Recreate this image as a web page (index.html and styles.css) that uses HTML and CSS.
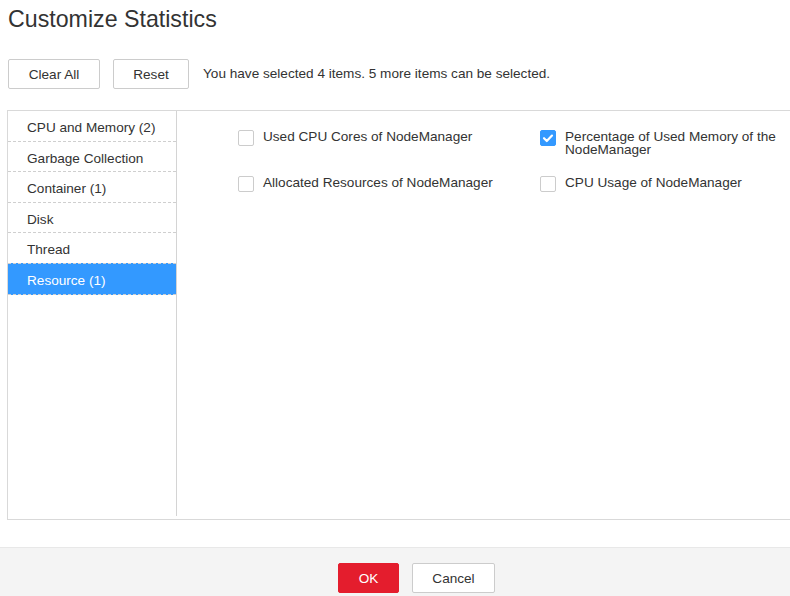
FILE: index.html
```html
<!DOCTYPE html>
<html lang="en">
<head>
<meta charset="UTF-8">
<meta name="viewport" content="width=device-width">
<title>Customize Statistics</title>
<link rel="stylesheet" href="styles.css">
</head>
<body>
<div class="dialog">
  <h1 class="title">Customize Statistics</h1>

  <div class="toolbar">
    <button class="btn btn-clear">Clear All</button>
    <button class="btn btn-reset">Reset</button>
    <span class="hint">You have selected 4 items. 5 more items can be selected.</span>
  </div>

  <div class="panel">
    <ul class="groups">
      <li class="group">CPU and Memory (2)</li>
      <li class="group">Garbage Collection</li>
      <li class="group">Container (1)</li>
      <li class="group">Disk</li>
      <li class="group">Thread</li>
      <li class="group active">Resource (1)</li>
    </ul>

    <div class="metrics">
      <label class="metric">
        <span class="check"></span>
        <span class="metric-name">Used CPU Cores of NodeManager</span>
      </label>
      <label class="metric">
        <span class="check checked">
          <svg viewBox="0 0 16 16" width="16" height="16"><path d="M4 8.2 L6.8 11 L12 5.6" fill="none" stroke="#fff" stroke-width="2.2" stroke-linecap="round" stroke-linejoin="round"/></svg>
        </span>
        <span class="metric-name">Percentage of Used Memory of the NodeManager</span>
      </label>
      <label class="metric">
        <span class="check"></span>
        <span class="metric-name">Allocated Resources of NodeManager</span>
      </label>
      <label class="metric">
        <span class="check"></span>
        <span class="metric-name">CPU Usage of NodeManager</span>
      </label>
    </div>
  </div>

  <div class="footer">
    <button class="btn btn-ok">OK</button>
    <button class="btn btn-cancel">Cancel</button>
  </div>
</div>
</body>
</html>
```

FILE: styles.css
```css
html, body {
  margin: 0;
  padding: 0;
  overflow: hidden;
  background: #fff;
}
body {
  font-family: "Liberation Sans", Arial, sans-serif;
  font-size: 13.6px;
  color: #333;
}
.dialog {
  width: 833px;
  height: 596px;
}
.title {
  margin: 0;
  padding: 6px 0 0 8px;
  font-size: 23.2px;
  font-weight: normal;
  line-height: 26px;
  color: #333;
}
.toolbar {
  display: flex;
  align-items: center;
  margin-top: 27px;
  padding-left: 8px;
}
.btn {
  font-family: inherit;
  font-size: 13.6px;
  color: #333;
  background: #fff;
  border: 1px solid #ccc;
  border-radius: 2px;
  height: 30px;
  padding: 0;
  margin: 0;
}
.btn-clear { width: 92px; }
.btn-reset { width: 76px; margin-left: 13px; }
.hint { margin-left: 14px; margin-top: -2px; }

.panel {
  display: flex;
  margin: 21px 0 0 7px;
  height: 408px;
  border: 1px solid #d9d9d9;
  border-right: none;
}
.groups {
  list-style: none;
  margin: 0 0 3px 0;
  padding: 0;
  width: 168px;
  border-right: 1px solid #d4d4d4;
  flex-shrink: 0;
}
.group {
  height: 30.6px;
  box-sizing: border-box;
  padding: 4px 0 0 19px;
  line-height: 25px;
  border-bottom: 1px dashed #cfcfcf;
}
.group.active {
  background: #3399ff;
  color: #fff;
  margin-top: -1px;
  height: 31.6px;
  border-top: 1px dashed #cfcfcf;
}

.metrics {
  display: grid;
  grid-template-columns: 302px 302px;
  align-content: start;
  row-gap: 20px;
  padding: 19px 0 0 61px;
}
.metric {
  display: flex;
  align-items: flex-start;
}
.check {
  width: 16px;
  height: 16px;
  box-sizing: border-box;
  border: 1px solid #ccc;
  border-radius: 2px;
  flex-shrink: 0;
  background: #fff;
}
.check.checked {
  background: #3399ff;
  border-color: #3399ff;
}
.check svg {
  display: block;
  margin: -1px;
}
.metric-name {
  margin-left: 9px;
  line-height: 13px;
  width: 250px;
}

.footer {
  margin-top: 27px;
  border-top: 1px solid #e8e8e8;
  background: #f4f4f4;
  height: 60px;
  display: flex;
  justify-content: center;
  padding-top: 15px;
  gap: 13px;
}
.btn-ok {
  width: 61px;
  background: #e41d2d;
  border-color: #e41d2d;
  color: #fff;
}
.btn-cancel { width: 83px; }
```
